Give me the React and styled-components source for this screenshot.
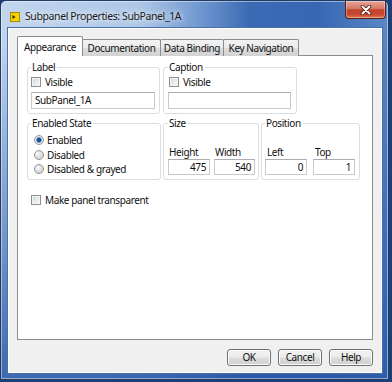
import React from 'react'
import styled, { createGlobalStyle } from 'styled-components'

const GlobalStyle = createGlobalStyle`
  html, body {
    margin: 0;
    padding: 0;
    background: #1d3f78;
  }
  body {
    width: 392px;
    height: 382px;
    overflow: hidden;
    font-family: "Noto Sans", "Liberation Sans", sans-serif;
    font-size: 10px;
    letter-spacing: -0.4px;
    color: #111;
  }
`

const Window = styled.div`
  width: 389px;
  height: 380px;
  box-sizing: border-box;
  border: 1px solid #233c63;
  border-radius: 6px 6px 0 0;
  display: flex;
  flex-direction: column;
  background:
    linear-gradient(180deg, rgba(40, 90, 170, 0) 30px, rgba(38, 86, 166, 0.85) 100%),
    linear-gradient(90deg, #c2d6ee 0%, #adc7e8 36%, #6e96ce 52%, #3b6bb4 64%, #3767b2 82%, #5b87c6 100%);
  box-shadow: inset 0 0 0 1px rgba(255, 255, 255, 0.45);
`

const TitleBar = styled.div`
  height: 27px;
  display: flex;
  align-items: flex-start;
  padding-left: 9px;
`

const TitleIcon = styled.svg`
  margin-top: 11px;
  flex: none;
`

const TitleText = styled.span`
  margin: 8px 0 0 5px;
  font-size: 10.5px;
  letter-spacing: -0.4px;
  line-height: 14px;
  color: #1a1a1a;
  text-shadow: 0 0 5px rgba(255, 255, 255, 0.9), 0 0 9px rgba(255, 255, 255, 0.7);
`

const CloseButton = styled.div`
  margin-left: auto;
  margin-right: 2px;
  width: 41px;
  height: 18px;
  box-sizing: border-box;
  border: 1px solid #5c1d15;
  border-top: none;
  border-radius: 0 0 4px 4px;
  background: linear-gradient(180deg, #e6a799 0%, #d67966 44%, #c2412a 52%, #c9492f 80%, #dd7a52 100%);
  box-shadow: inset 0 0 0 1px rgba(255, 255, 255, 0.35);
  display: flex;
  align-items: center;
  justify-content: center;
`

const Frame = styled.div`
  flex: 1;
  display: flex;
  padding: 0 6px 6px 7px;
`

const Client = styled.div`
  flex: 1;
  display: flex;
  flex-direction: column;
  background: #f0f0f0;
  border: 1px solid #fbfcfd;
  box-shadow: 0 0 0 1px #4b6fa8;
`

const TabStrip = styled.div`
  display: flex;
  align-items: flex-end;
  height: 20px;
  margin: 7px 0 -1px 8px;
  position: relative;
  z-index: 1;
`

const Tab = styled.div`
  width: ${p => p.$w}px;
  height: ${p => (p.$active ? 20 : 17)}px;
  box-sizing: border-box;
  border: 1px solid #898c95;
  border-bottom: none;
  margin-left: ${p => (p.$first ? 0 : -1)}px;
  border-radius: 2px 2px 0 0;
  display: flex;
  align-items: center;
  justify-content: center;
  padding-bottom: ${p => (p.$active ? 0 : 1)}px;
  background: ${p =>
    p.$active
      ? '#ffffff'
      : 'linear-gradient(180deg, #f3f3f3 0%, #ebebeb 48%, #dedede 52%, #d2d2d2 100%)'};
  position: relative;
  z-index: ${p => (p.$active ? 2 : 1)};
  white-space: nowrap;
`

const Panel = styled.div`
  flex: 1;
  margin: 0 8px 0 8px;
  border: 1px solid #898c95;
  background: #fff;
  padding: 5px 0 0 9px;
  display: flex;
  flex-direction: column;
`

const GroupRow = styled.div`
  display: flex;
  gap: ${p => p.$gap}px;
  height: ${p => p.$h}px;
  margin-top: ${p => p.$mt || 0}px;
`

const Group = styled.fieldset`
  margin: 0;
  min-width: 0;
  width: ${p => p.$w}px;
  box-sizing: border-box;
  border: 1px solid #d5dfe5;
  border-radius: 3px;
  padding: 0 ${p => p.$pr}px 4px ${p => p.$pl}px;
  display: flex;
  flex-direction: column;
`

const Legend = styled.legend`
  padding: 0 2px 0 1px;
  margin-left: 0;
  line-height: 13px;
`

const CheckRow = styled.label`
  display: flex;
  align-items: center;
  gap: 4px;
  height: 12px;
  margin: ${p => p.$m || '0'};
`

const Check = styled.span`
  width: 10px;
  height: 10px;
  box-sizing: border-box;
  border: 1px solid #8e8f8f;
  background: linear-gradient(135deg, #cfd1d4 0%, #eeeeee 60%, #fafafa 100%);
  box-shadow: inset 0 0 0 1px #f3f3f3;
  flex: none;
`

const TextBox = styled.div`
  height: ${p => p.$h || 17}px;
  width: ${p => (p.$w ? `${p.$w}px` : 'auto')};
  box-sizing: border-box;
  border: 1px solid #c8cace;
  border-top-color: #abadb3;
  background: #fff;
  display: flex;
  align-items: center;
  justify-content: ${p => (p.$right ? 'flex-end' : 'flex-start')};
  padding: 0 3px;
  line-height: 13px;
`

const RadioList = styled.div`
  display: flex;
  flex-direction: column;
  margin: 3px 0 0 3px;
`

const RadioRow = styled.div`
  display: flex;
  align-items: center;
  gap: 3px;
  height: 14.5px;
`

const Radio = styled.span`
  width: 10px;
  height: 10px;
  box-sizing: border-box;
  border-radius: 50%;
  border: 1px solid #959696;
  background: ${p =>
    p.$on
      ? 'radial-gradient(circle, #1f5fa5 0, #154a86 1.6px, #6fa3d8 2.6px, #e9eef3 3.2px, #d9dadc 5px)'
      : 'radial-gradient(circle at 35% 35%, #ffffff 0, #eaeaea 2px, #d3d4d6 5px)'};
  flex: none;
`

const FieldArea = styled.div`
  flex: 1;
  display: flex;
  align-items: flex-end;
  gap: ${p => p.$gap}px;
`

const Field = styled.div`
  display: flex;
  flex-direction: column;
  width: ${p => p.$w}px;
`

const FieldLabel = styled.span`
  line-height: 13px;
  padding-left: ${p => p.$pl || 1}px;
`

const ButtonRow = styled.div`
  display: flex;
  justify-content: flex-end;
  gap: 7px;
  padding: 9px 8px 6px 0;
`

const Button = styled.div`
  width: 44px;
  height: 17px;
  box-sizing: border-box;
  border: 1px solid #707070;
  border-radius: 3px;
  background: linear-gradient(180deg, #f2f2f2 0%, #ebebeb 48%, #dddddd 52%, #cfcfcf 100%);
  box-shadow: inset 0 0 0 1px #fcfcfc;
  display: flex;
  align-items: center;
  justify-content: center;
  line-height: 13px;
`

const tabs = [
  { name: 'Appearance', w: 66, active: true },
  { name: 'Documentation', w: 79 },
  { name: 'Data Binding', w: 64 },
  { name: 'Key Navigation', w: 76 },
]

const radios = [
  { name: 'Enabled', on: true },
  { name: 'Disabled' },
  { name: 'Disabled & grayed' },
]

export default function App() {
  return (
    <>
      <GlobalStyle />
      <Window>
        <TitleBar>
          <TitleIcon width="10" height="10" viewBox="0 0 10 10">
            <rect x="0.5" y="0.5" width="9" height="9" fill="#f4d400" stroke="#a88a00" />
            <path d="M2.5 3 L5.5 5 L2.5 7 Z" fill="#3a2a00" />
          </TitleIcon>
          <TitleText>Subpanel Properties: SubPanel_1A</TitleText>
          <CloseButton>
            <svg width="12" height="10" viewBox="0 0 12 10">
              <path d="M2.5 1.5 L9.5 8.5 M9.5 1.5 L2.5 8.5" stroke="#4a1a12" strokeWidth="3.6" strokeLinecap="round" />
              <path d="M2.5 1.5 L9.5 8.5 M9.5 1.5 L2.5 8.5" stroke="#ffffff" strokeWidth="2" strokeLinecap="round" />
            </svg>
          </CloseButton>
        </TitleBar>
        <Frame>
          <Client>
            <TabStrip>
              {tabs.map((t, i) => (
                <Tab key={t.name} $w={t.w} $active={t.active} $first={i === 0}>
                  {t.name}
                </Tab>
              ))}
            </TabStrip>
            <Panel>
              <GroupRow $gap={3} $h={53}>
                <Group $w={133} $pl={3} $pr={4}>
                  <Legend>Label</Legend>
                  <CheckRow $m="2px 0 0 0">
                    <Check />
                    Visible
                  </CheckRow>
                  <TextBox style={{ marginTop: 4 }}>SubPanel_1A</TextBox>
                </Group>
                <Group $w={134} $pl={4} $pr={5}>
                  <Legend>Caption</Legend>
                  <CheckRow $m="2px 0 0 1px">
                    <Check />
                    Visible
                  </CheckRow>
                  <TextBox style={{ marginTop: 4 }} />
                </Group>
              </GroupRow>
              <GroupRow $gap={2} $h={63} $mt={3}>
                <Group $w={134} $pl={3} $pr={3}>
                  <Legend>Enabled State</Legend>
                  <RadioList>
                    {radios.map(r => (
                      <RadioRow key={r.name}>
                        <Radio $on={r.on} />
                        {r.name}
                      </RadioRow>
                    ))}
                  </RadioList>
                </Group>
                <Group $w={96} $pl={4} $pr={3}>
                  <Legend>Size</Legend>
                  <FieldArea $gap={4}>
                    <Field $w={42}>
                      <FieldLabel>Height</FieldLabel>
                      <TextBox $h={16} $right>475</TextBox>
                    </Field>
                    <Field $w={41}>
                      <FieldLabel $pl={0}>Width</FieldLabel>
                      <TextBox $h={16} $right>540</TextBox>
                    </Field>
                  </FieldArea>
                </Group>
                <Group $w={99} $pl={3} $pr={4}>
                  <Legend>Position</Legend>
                  <FieldArea $gap={6}>
                    <Field $w={42}>
                      <FieldLabel $pl={2}>Left</FieldLabel>
                      <TextBox $h={16} $right>0</TextBox>
                    </Field>
                    <Field $w={42}>
                      <FieldLabel $pl={2}>Top</FieldLabel>
                      <TextBox $h={16} $right>1</TextBox>
                    </Field>
                  </FieldArea>
                </Group>
              </GroupRow>
              <CheckRow $m="14px 0 0 4px">
                <Check />
                Make panel transparent
              </CheckRow>
            </Panel>
            <ButtonRow>
              <Button>OK</Button>
              <Button>Cancel</Button>
              <Button>Help</Button>
            </ButtonRow>
          </Client>
        </Frame>
      </Window>
    </>
  )
}
